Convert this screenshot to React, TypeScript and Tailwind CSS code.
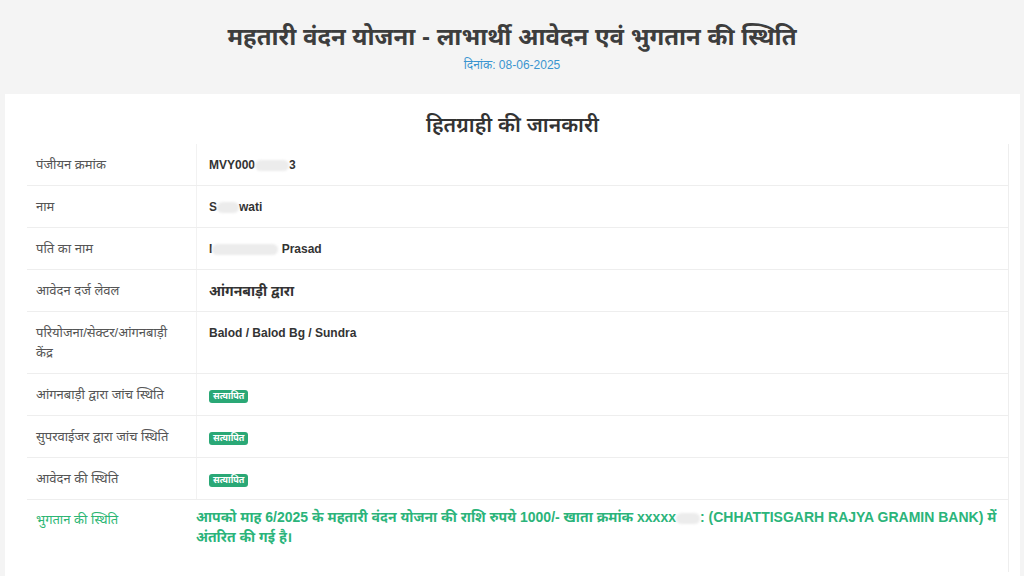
const FONT = { fontFamily: '"Liberation Sans", "Noto Sans", "Noto Sans Devanagari", sans-serif' };

type Row = { label: string; value: React.ReactNode; tall?: boolean };

function Badge() {
  return (
    <span className="inline-block rounded-[3px] bg-[#2aa876] px-[4px] text-[9px] leading-[13px] text-white">
      सत्यापित
    </span>
  );
}

function Blur({ w }: { w: number }) {
  return <span className="inline-block h-[11px] rounded-full bg-[#ececec] align-middle blur-[1px]" style={{ width: w }} />;
}

const rows: Row[] = [
  {
    label: 'पंजीयन क्रमांक',
    value: (
      <>
        MVY000<Blur w={34} />3
      </>
    ),
  },
  {
    label: 'नाम',
    value: (
      <>
        S<Blur w={22} />wati
      </>
    ),
  },
  {
    label: 'पति का नाम',
    value: (
      <>
        I<Blur w={66} /> Prasad
      </>
    ),
  },
  { label: 'आवेदन दर्ज लेवल', value: <span className="text-[14px]">आंगनबाड़ी द्वारा</span> },
  { label: 'परियोजना/सेक्टर/आंगनबाड़ी केंद्र', value: 'Balod / Balod Bg / Sundra', tall: true },
  { label: 'आंगनबाड़ी द्वारा जांच स्थिति', value: <Badge /> },
  { label: 'सुपरवाईजर द्वारा जांच स्थिति', value: <Badge /> },
  { label: 'आवेदन की स्थिति', value: <Badge /> },
];

export default function App() {
  return (
    <div className="h-[576px] w-full overflow-hidden bg-[#f4f4f4] text-[#444]" style={FONT}>
      {/* Header */}
      <div className="flex h-[94px] flex-col items-center pt-[19px]">
        <h1 className="text-[24px] font-bold leading-[36px] text-[#3d3d3d]">
          महतारी वंदन योजना - लाभार्थी आवेदन एवं भुगतान की स्थिति
        </h1>
        <div className="mt-[2px] text-[12px] leading-[16px] text-[#3a95d0]">दिनांक: 08-06-2025</div>
      </div>

      {/* Card */}
      <div className="ml-[5px] mr-[4px] bg-white pb-[20px] pt-[16px]">
        <h2 className="text-center text-[21px] font-semibold leading-[30px] text-[#333]">हितग्राही की जानकारी</h2>

        <div className="ml-[22px] mr-[11px] mt-[4px] border-r border-[#eee]">
          {rows.map((r, i) => (
            <div key={i} className={`flex border-b border-[#eee] ${r.tall ? 'h-[62px]' : 'h-[42px]'}`}>
              <div className="w-[170px] shrink-0 border-r border-[#f2f2f2] pl-[9px] pr-[24px] pt-[11px] text-[13px] leading-[20px] text-[#555]">
                {r.label}
              </div>
              <div className="flex-1 pl-[12px] pt-[11px] text-[12px] font-bold leading-[20px] text-[#333]">{r.value}</div>
            </div>
          ))}
          <div className="flex h-[72px]">
            <div className="w-[169px] shrink-0 pl-[9px] pt-[10px] text-[13px] leading-[20px] text-[#2bb673]">
              भुगतान की स्थिति
            </div>
            <div className="flex-1 pr-[2px] pt-[7px] text-[14px] font-bold leading-[20px] text-[#2bb47a]">
              आपको माह 6/2025 के महतारी वंदन योजना की राशि रुपये 1000/- खाता क्रमांक xxxxx<Blur w={24} />:
              (CHHATTISGARH RAJYA GRAMIN BANK) में अंतरित की गई है।
            </div>
          </div>
        </div>
      </div>
    </div>
  );
}
